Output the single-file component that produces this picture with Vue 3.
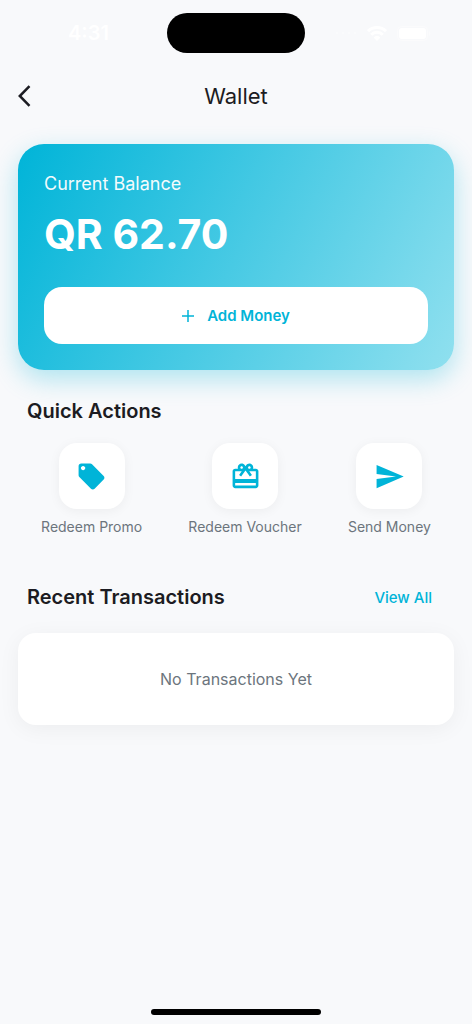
<script setup>
const balance = 'QR 62.70'

const actions = [
  {
    label: 'Redeem Promo',
    path: 'M21.41 11.58l-9-9C12.05 2.22 11.55 2 11 2H4c-1.1 0-2 .9-2 2v7c0 .55.22 1.05.59 1.42l9 9c.36.36.86.58 1.41.58s1.05-.22 1.41-.59l7-7c.37-.36.59-.86.59-1.41s-.23-1.06-.59-1.42zM5.5 7.2C4.56 7.2 3.8 6.44 3.8 5.5S4.56 3.8 5.5 3.8 7.2 4.56 7.2 5.5 6.44 7.2 5.5 7.2z',
  },
  {
    label: 'Redeem Voucher',
    path: 'M20 6h-2.18c.11-.31.18-.65.18-1 0-1.66-1.34-3-3-3-1.05 0-1.96.54-2.5 1.35l-.5.67-.5-.68C10.96 2.54 10.05 2 9 2 7.34 2 6 3.34 6 5c0 .35.07.69.18 1H4c-1.11 0-1.99.89-1.99 2L2 19c0 1.11.89 2 2 2h16c1.11 0 2-.89 2-2V8c0-1.11-.89-2-2-2zm-5-2c.55 0 1 .45 1 1s-.45 1-1 1-1-.45-1-1 .45-1 1-1zM9 4c.55 0 1 .45 1 1s-.45 1-1 1-1-.45-1-1 .45-1 1-1zm11 15H4v-2h16v2zm0-5H4V8h5.08L7 10.83 8.62 12 11 8.76l1-1.36 1 1.36L15.38 12 17 10.83 14.92 8H20v6z',
  },
  {
    label: 'Send Money',
    path: 'M2.01 21L23 12 2.01 3 2 10l15 2-15 2z',
  },
]
</script>

<template>
  <div class="screen">
    <div class="status">
      <span class="time">4:31</span>
      <div class="island"></div>
      <div class="signals">
        <svg class="dots" viewBox="0 0 22 4" aria-hidden="true">
          <circle cx="2" cy="2" r="1" /><circle cx="8" cy="2" r="1" />
          <circle cx="14" cy="2" r="1" /><circle cx="20" cy="2" r="1" />
        </svg>
        <svg class="wifi" viewBox="0 0 20 15" aria-hidden="true">
          <path d="M1 5.2a13 13 0 0 1 18 0M4.2 8.7a8.3 8.3 0 0 1 11.6 0" />
          <path class="solid" d="M6.6 11.4a5 5 0 0 1 6.8 0L10 15z" />
        </svg>
        <svg class="battery" viewBox="0 0 34 15" aria-hidden="true">
          <rect class="shell" x="0.5" y="0.5" width="30" height="14" rx="4" />
          <rect x="2" y="2" width="27" height="11" rx="3" />
          <path class="cap" d="M32 5v5c2-1 2-4 0-5z" />
        </svg>
      </div>
    </div>

    <header class="bar">
      <button class="back" type="button" aria-label="Back">
        <svg viewBox="0 0 13 22" aria-hidden="true"><path d="M11.5 1.2L1.8 11l9.7 9.8" /></svg>
      </button>
      <h1>Wallet</h1>
    </header>

    <main>
      <section class="balance">
        <p class="caption">Current Balance</p>
        <p class="amount">{{ balance }}</p>
        <button class="add" type="button">
          <svg viewBox="0 0 12 12" aria-hidden="true"><path d="M6 0v12M0 6h12" /></svg>
          Add Money
        </button>
      </section>

      <section>
        <div class="heading"><h2>Quick Actions</h2></div>
        <div class="actions">
          <button v-for="action in actions" :key="action.label" class="action" type="button">
            <span class="tile">
              <svg viewBox="0 0 24 24" aria-hidden="true"><path :d="action.path" /></svg>
            </span>
            <span>{{ action.label }}</span>
          </button>
        </div>
      </section>

      <section class="recent">
        <div class="heading">
          <h2>Recent Transactions</h2>
          <a href="#">View All</a>
        </div>
        <p class="empty">No Transactions Yet</p>
      </section>
    </main>

    <div class="home"></div>
  </div>
</template>

<style>
body {
  margin: 0;
  background: #f8f9fb;
}
</style>

<style scoped>
.screen {
  box-sizing: border-box;
  display: flex;
  flex-direction: column;
  min-height: 100vh;
  padding-bottom: 9px;
  background: #f8f9fb;
  color: #1c1c22;
  font-family: Inter, "Liberation Sans", sans-serif;
}
h1, h2, p {
  margin: 0;
}
button {
  padding: 0;
  border: 0;
  background: none;
  color: inherit;
  font: inherit;
  cursor: pointer;
}
.status {
  display: grid;
  grid-template-columns: 1fr 138px 1fr;
  align-items: center;
  height: 40px;
  padding-top: 13px;
  color: #fff;
}
.time {
  justify-self: center;
  padding-left: 10px;
  font-size: 20px;
  font-weight: 600;
}
.island {
  height: 40px;
  border-radius: 20px;
  background: #000;
}
.signals {
  display: flex;
  align-items: center;
  justify-content: flex-end;
  gap: 10px;
  padding-right: 41px;
  fill: #fff;
}
.dots {
  width: 22px;
  height: 4px;
  opacity: 0.4;
}
.wifi {
  width: 20px;
  height: 15px;
  fill: none;
  stroke: #fff;
  stroke-width: 3;
}
.wifi .solid {
  fill: #fff;
  stroke: none;
}
.battery {
  width: 34px;
  height: 15px;
}
.shell {
  fill: none;
  stroke: #fff;
  opacity: 0.4;
}
.cap {
  opacity: 0.4;
}
.bar {
  display: grid;
  grid-template-columns: 1fr auto 1fr;
  align-items: center;
  height: 64px;
  margin-top: 11px;
  padding: 0 18px;
}
.back {
  display: flex;
  justify-self: start;
}
.back svg {
  width: 13px;
  height: 22px;
  fill: none;
  stroke: #1c1c22;
  stroke-width: 2.5;
}
h1 {
  font-size: 22px;
  font-weight: 400;
  line-height: 28px;
}
main {
  padding: 16px 18px 0;
}
.balance {
  padding: 26px;
  border-radius: 26px;
  background: linear-gradient(117deg, #00b4d8, #48cae4 50%, #90e0ef);
  box-shadow: 0 9px 26px rgba(0, 180, 216, 0.3);
  color: #fff;
}
.caption {
  font-size: 18px;
  line-height: 28px;
  opacity: 0.95;
}
.amount {
  margin-top: 11px;
  font-size: 41px;
  font-weight: 700;
  line-height: 50px;
}
.add {
  display: flex;
  align-items: center;
  justify-content: center;
  gap: 13px;
  width: 100%;
  height: 57px;
  margin-top: 28px;
  border-radius: 18px;
  background: #fff;
  color: #00b4d8;
  font-size: 15px;
  font-weight: 600;
}
.add svg {
  width: 12px;
  height: 12px;
  fill: none;
  stroke: #00b4d8;
  stroke-width: 1.5;
}
.heading {
  display: flex;
  align-items: center;
  justify-content: space-between;
  padding: 0 22px 0 9px;
}
.balance + section {
  margin-top: 27px;
}
h2 {
  font-size: 20px;
  font-weight: 600;
  line-height: 28px;
}
.actions {
  display: flex;
  justify-content: space-around;
  margin-top: 18px;
}
.action {
  display: flex;
  flex-direction: column;
  align-items: center;
  gap: 9px;
  color: #6c757d;
  font-size: 14px;
  line-height: 18px;
}
.tile {
  display: grid;
  place-items: center;
  width: 66px;
  height: 66px;
  border-radius: 18px;
  background: #fff;
  box-shadow: 0 2px 12px rgba(0, 0, 0, 0.05);
}
.tile svg {
  width: 31px;
  height: 31px;
  fill: #00b4d8;
}
.recent {
  margin-top: 47px;
}
.heading a {
  color: #00b4d8;
  font-size: 15px;
  font-weight: 500;
  text-decoration: none;
}
.empty {
  margin-top: 22px;
  padding: 34px 18px;
  border-radius: 18px;
  background: #fff;
  box-shadow: 0 4px 22px rgba(0, 0, 0, 0.05);
  color: #6c757d;
  font-size: 16px;
  line-height: 24px;
  text-align: center;
}
.home {
  align-self: center;
  width: 36%;
  height: 6px;
  margin-top: auto;
  border-radius: 3px;
  background: #000;
}
</style>
